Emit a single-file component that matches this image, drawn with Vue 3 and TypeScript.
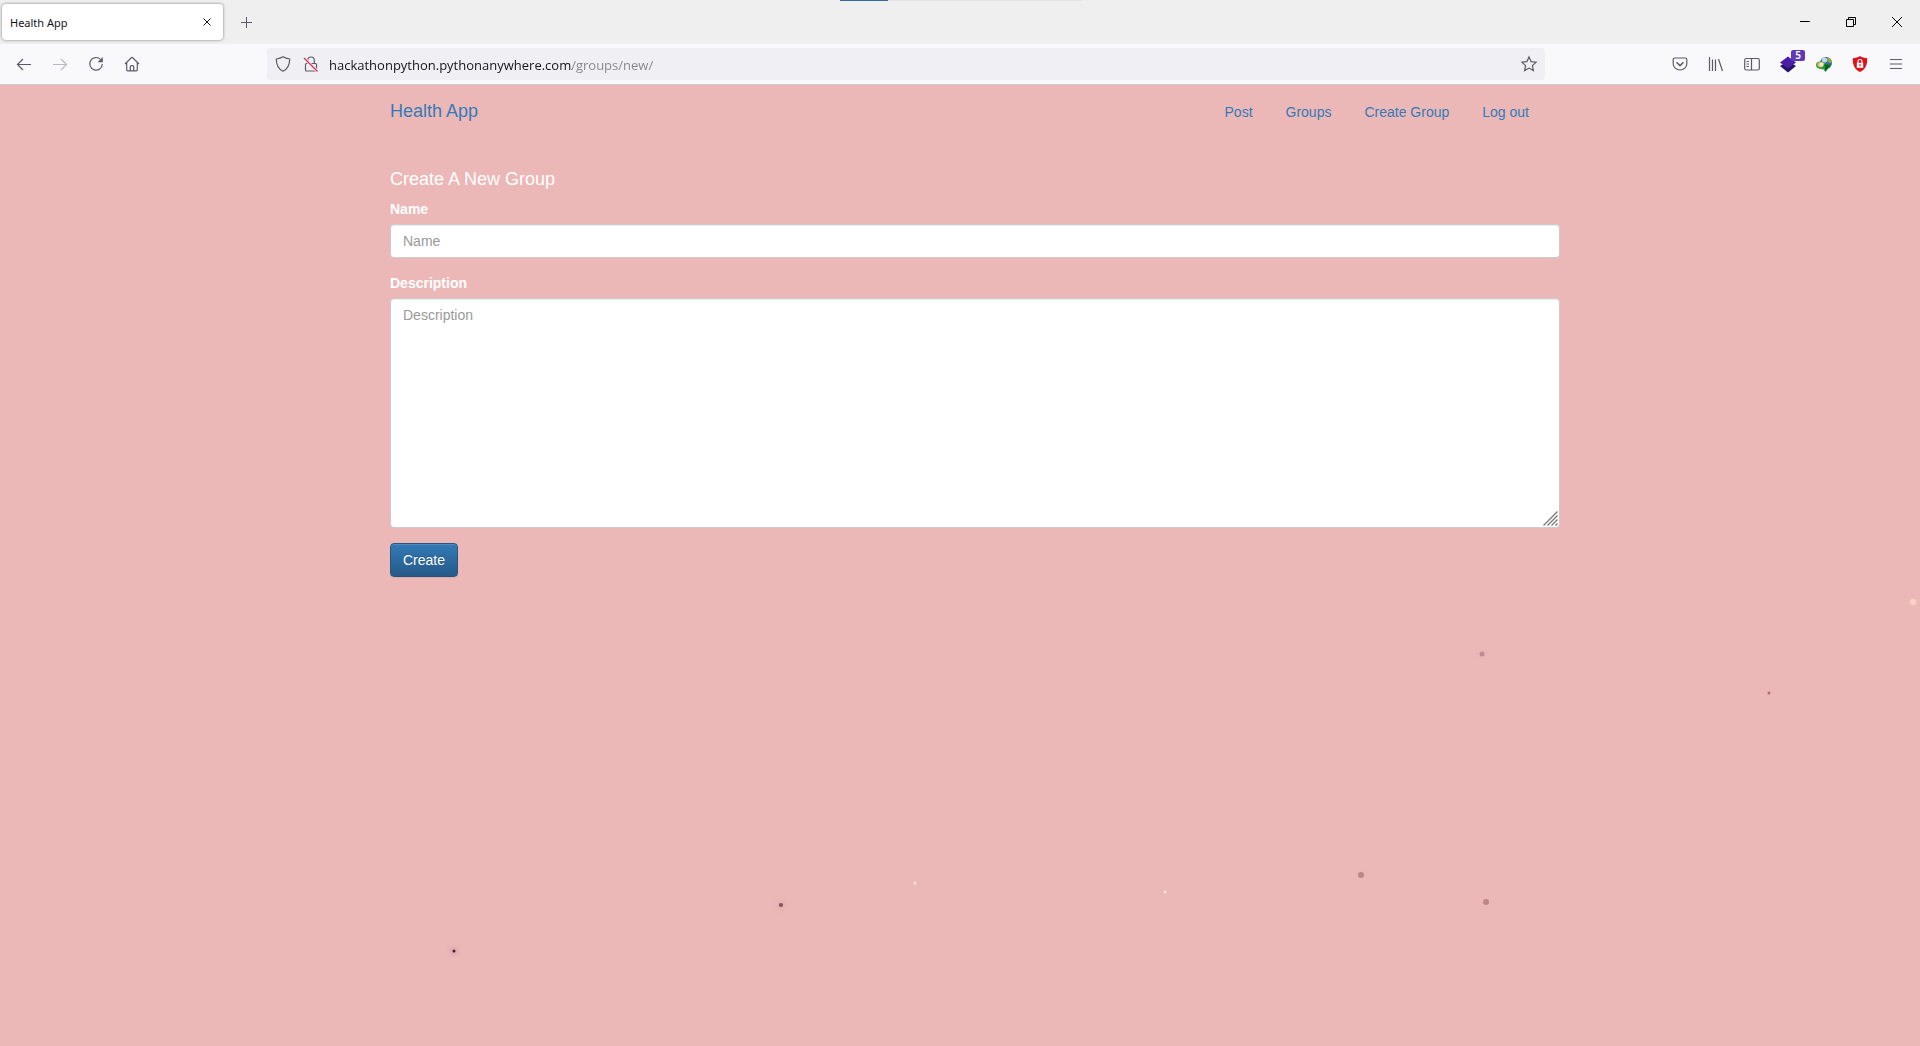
<script setup lang="ts">
import { ref } from 'vue'

interface Particle {
  x: number
  y: number
  size: number
  color: string
  glow: string
}

const tabTitle = 'Health App'
const address = ref('hackathonpython.pythonanywhere.com/groups/new/')
const name = ref('')
const description = ref('')

const links: string[] = ['Post', 'Groups', 'Create Group', 'Log out']

// x is a share of the page width in percent, y is in pixels below the toolbar
const particles: Particle[] = [
  { x: 99.64, y: 517, size: 6, color: '#fad2c4', glow: '0 0 2px #f7cdc0' },
  { x: 77.2, y: 569, size: 5, color: '#c28a91', glow: '0 0 6px rgba(220, 150, 170, 0.3)' },
  { x: 92.14, y: 608, size: 3, color: '#ad7079', glow: '0 0 4px rgba(220, 140, 180, 0.4)' },
  { x: 70.88, y: 790, size: 6, color: '#bd8686', glow: '0 0 12px rgba(220, 160, 165, 0.2)' },
  { x: 77.4, y: 817, size: 6, color: '#bd8686', glow: '0 0 14px rgba(220, 160, 165, 0.2)' },
  { x: 47.66, y: 798, size: 3, color: '#fde0d8', glow: 'none' },
  { x: 60.68, y: 807, size: 3, color: '#fde0d8', glow: 'none' },
  { x: 40.7, y: 820, size: 4, color: '#80505f', glow: '0 0 6px 1px rgba(190, 120, 160, 0.4)' },
  { x: 23.65, y: 866, size: 3, color: '#452038', glow: '0 0 5px 1px rgba(170, 100, 150, 0.5)' },
]
</script>

<template>
  <div class="browser">
    <div class="tabstrip">
      <div class="tab">
        <span class="tab-title">{{ tabTitle }}</span>
        <button class="tab-close" type="button" aria-label="Close tab">
          <svg width="10" height="10" viewBox="0 0 10 10"><path d="M1.5 1.5l7 7M8.500 1.500l-7 7" stroke="#15141a" /></svg>
        </button>
      </div>
      <button class="new-tab" type="button" aria-label="New tab">
        <svg width="13" height="13" viewBox="0 0 13 13"><path d="M6.500 1v11M1 6.500h11" stroke="#5b5b66" /></svg>
      </button>
      <div class="load-bar"><div class="load-fill"></div></div>
      <div class="window-buttons">
        <button type="button" aria-label="Minimize">
          <svg width="12" height="12" viewBox="0 0 12 12"><path d="M1 5.500h10" stroke="#000" /></svg>
        </button>
        <button type="button" aria-label="Restore">
          <svg width="12" height="12" viewBox="0 0 12 12" fill="none" stroke="#000"><path d="M1.500 3.500h7v7h-7zM3.500 3.500v-2h7v7h-2" /></svg>
        </button>
        <button type="button" aria-label="Close window">
          <svg width="12" height="12" viewBox="0 0 12 12"><path d="M1 1l10 10M11 1L1 11" stroke="#000" /></svg>
        </button>
      </div>
    </div>

    <div class="toolbar">
      <div class="nav-buttons">
        <button type="button" aria-label="Back">
          <svg viewBox="0 0 16 16"><path d="M15 8.500H1.500M7 3L1.500 8.500 7 14" /></svg>
        </button>
        <button class="disabled" type="button" aria-label="Forward">
          <svg viewBox="0 0 16 16"><path d="M1 8.500h13.500M9 3L14.500 8.500 9 14" /></svg>
        </button>
        <button type="button" aria-label="Reload">
          <svg viewBox="0 0 16 16"><path d="M12.500 3.400A6.300 6.300 0 1 0 14.300 8" /><path d="M14.800 1v5.200H9.600z" fill="#5b5b66" stroke="none" /></svg>
        </button>
        <button type="button" aria-label="Home">
          <svg viewBox="0 0 16 16"><path d="M1 8l6.300-6.200a1 1 0 0 1 1.400 0L15 8M2.700 6.500v7.300a1 1 0 0 0 1 1h8.600a1 1 0 0 0 1-1V6.500M6.300 14.800v-4a1.200 1.200 0 0 1 1.200-1.200h1a1.200 1.200 0 0 1 1.200 1.200v4" /></svg>
        </button>
      </div>

      <div class="urlbar">
        <svg viewBox="0 0 16 16"><path d="M8 .8c2 1.300 4 1.900 6.700 2.200 0 5.600-1.700 9.900-6.700 12.200C3 12.900 1.300 8.600 1.300 3 4 2.700 6 2.100 8 .8z" /></svg>
        <svg viewBox="0 0 16 16"><rect x="2.500" y="7.500" width="11" height="7.500" rx="1" /><path d="M4.700 7.500V4.300a3.300 3.300 0 0 1 6.600 0v3.200" /><path d="M1 2l13.500 13.500" stroke="#f0f0f4" stroke-width="3" /><path d="M1 2l13.500 13.500" stroke="#e22850" stroke-width="1.300" /></svg>
        <input v-model="address" class="address" type="text" aria-label="Address" />
        <svg viewBox="0 0 16 16"><path d="M8 1l2.100 4.600 5 .6-3.700 3.400 1 5L8 12.100l-4.400 2.500 1-5L.9 6.200l5-.6z" /></svg>
      </div>

      <div class="extensions">
        <button type="button" aria-label="Pocket">
          <svg viewBox="0 0 16 16"><path d="M2.700 2h10.600a1.500 1.500 0 0 1 1.500 1.500v4.200a6.800 6.300 0 0 1-13.600 0V3.500A1.500 1.500 0 0 1 2.700 2z" /><path d="M4.500 6.300L8 9.600l3.500-3.300" stroke-width="1.500" /></svg>
        </button>
        <button type="button" aria-label="Library">
          <svg viewBox="0 0 16 16"><path d="M1.500 1v14M4.500 3.500V15M7.500 3.500V15M10.500 3L14.500 15" /></svg>
        </button>
        <button type="button" aria-label="Sidebars">
          <svg viewBox="0 0 16 16"><rect x=".7" y="2.500" width="14.600" height="11.500" rx="1.500" /><path d="M7.500 2.500V14M2.500 5.500H5M2.500 8H5M2.500 10.500H5" /></svg>
        </button>
        <button class="badged" type="button" aria-label="Web analyzer">
          <svg viewBox="0 0 16 16" stroke="none"><path d="M0 10l8-5 8 5-8 6.500z" fill="#25126b" /><path d="M0 6.500L8 .5l8 6-8 6z" fill="#4a1fa5" /></svg>
          <span class="badge">5</span>
        </button>
        <button type="button" aria-label="Download manager">
          <svg viewBox="0 0 16 16" stroke="none">
            <circle cx="10" cy="7" r="6" fill="#2f6cb3" />
            <circle cx="8.500" cy="4" r="2.600" fill="#b9d9ed" />
            <path d="M11 1.200c3 .3 4.600 2.300 5 5.300l-3 .5-2-2z" fill="#8fa63a" />
            <ellipse cx="4.500" cy="9" rx="4.500" ry="3.600" fill="#3c9a3a" />
            <ellipse cx="5" cy="8.600" rx="3.600" ry="2.600" fill="#e0c05a" />
            <path d="M3.500 10.500c-.5-2.500.5-4 2-4s2 1.500 2 3.500z" fill="#f1e2da" />
            <path d="M2 11c3 2 5 1 6-3h7.500l-6 8-2.500-3c-2 .5-4 0-5-2z" fill="#2d9b35" />
            <path d="M8.500 8.500h6.500l-5.500 7z" fill="#08651d" />
          </svg>
        </button>
        <button type="button" aria-label="Ad blocker">
          <svg viewBox="0 0 16 16" stroke="none"><path d="M8 0c2 1.400 4.500 2 7.200 2.200C15.500 8.500 13.500 13.500 8 16 2.500 13.500.5 8.500.8 2.200 3.500 2 6 1.400 8 0z" fill="#df1119" /><rect x="4.800" y="6.800" width="6.400" height="5" fill="#fff" /><path d="M6 7V5.500a2 2 0 0 1 4 0V7" fill="none" stroke="#fff" stroke-width="1.200" /><path d="M8 8.200v2" stroke="#df1119" stroke-width="1.200" /></svg>
        </button>
        <button type="button" aria-label="Menu">
          <svg viewBox="0 0 16 16"><path d="M2 3.500h12M2 8h12M2 12.500h12" /></svg>
        </button>
      </div>
    </div>

    <main class="page">
      <span
        v-for="(p, i) in particles"
        :key="i"
        class="particle"
        :style="{ left: p.x + '%', top: p.y + 'px', width: p.size + 'px', height: p.size + 'px', background: p.color, boxShadow: p.glow }"
      ></span>

      <div class="container">
        <header class="navbar">
          <a class="brand" href="#">Health App</a>
          <nav class="links">
            <a v-for="link in links" :key="link" href="#">{{ link }}</a>
          </nav>
        </header>

        <form @submit.prevent>
          <h1>Create A New Group</h1>
          <div class="group">
            <label for="group-name">Name</label>
            <input id="group-name" v-model="name" class="control" type="text" placeholder="Name" />
          </div>
          <div class="group">
            <label for="group-description">Description</label>
            <div class="area">
              <textarea id="group-description" v-model="description" class="control" placeholder="Description"></textarea>
              <svg class="grip" width="15" height="15" viewBox="0 0 15 15"><path d="M.5 14.500l14-14M4.500 14.500l10-10M8.500 14.500l6-6M12.500 14.500l2-2" stroke="#777" stroke-width="1.300" /></svg>
            </div>
          </div>
          <button class="submit" type="submit">Create</button>
        </form>
      </div>
    </main>
  </div>
</template>

<style>
body {
  margin: 0;
  background: #ecb8b7;
}
</style>

<style scoped>
* {
  box-sizing: border-box;
}

.browser {
  display: flex;
  flex-direction: column;
  min-height: 100vh;
  font-family: "Open Sans", "Noto Sans", sans-serif;
}

.browser button {
  border: 0;
  padding: 0;
  background: none;
}

.tabstrip {
  position: relative;
  display: flex;
  align-items: center;
  height: 44px;
  padding-left: 2px;
  background: #efefef;
}

.tab {
  display: flex;
  align-items: center;
  justify-content: space-between;
  width: 221px;
  height: 36px;
  padding: 0 10px 0 8px;
  border-radius: 4px;
  background: #fff;
  box-shadow: 0 0 3px rgba(0, 0, 0, 0.5);
}

.tab-title {
  font-family: "Noto Sans", sans-serif;
  font-size: 11px;
  color: #15141a;
}

.tab-close,
.new-tab {
  display: flex;
  align-items: center;
  justify-content: center;
}

.tab-close {
  width: 12px;
  height: 20px;
}

.new-tab {
  width: 32px;
  height: 32px;
  margin-left: 7px;
}

.load-bar {
  position: absolute;
  top: 0;
  left: 50%;
  width: 242px;
  height: 1px;
  margin-left: -120px;
  background: #e2e2e2;
}

.load-fill {
  width: 20%;
  height: 1px;
  background: #2f6da4;
}

.window-buttons {
  display: flex;
  align-self: stretch;
  margin-left: auto;
}

.window-buttons button {
  display: flex;
  align-items: center;
  justify-content: center;
  width: 46px;
}

.toolbar {
  display: flex;
  align-items: center;
  height: 41px;
  padding: 0 6px;
  border-bottom: 1px solid #cfcccf;
  background: #f9f9fb;
}

.toolbar svg {
  flex: none;
  width: 16px;
  height: 16px;
  overflow: visible;
  fill: none;
}

.toolbar svg:not([stroke]) {
  stroke: #5b5b66;
  stroke-width: 1.2;
}

.nav-buttons,
.extensions {
  display: flex;
}

.nav-buttons button,
.extensions button {
  display: flex;
  align-items: center;
  justify-content: center;
  width: 36px;
  height: 32px;
}

.nav-buttons .disabled {
  opacity: 0.4;
}

.urlbar {
  display: flex;
  flex: 1;
  align-items: center;
  gap: 12px;
  height: 32px;
  margin: 0 117px;
  padding: 0 8px;
  border-radius: 4px;
  background: #f0f0f4;
}

.address {
  flex: 1;
  min-width: 0;
  height: 26px;
  margin-left: -2px;
  padding: 2px 0 0;
  border: 0;
  outline: 0;
  background: linear-gradient(to right, #15141a 243px, #85848b 243px);
  background-clip: text;
  -webkit-background-clip: text;
  color: transparent;
  font-family: inherit;
  font-size: 13px;
}

.badged {
  position: relative;
}

.badge {
  position: absolute;
  top: 2px;
  right: 1px;
  width: 14px;
  height: 11px;
  border-radius: 2px;
  background: #6237b8;
  color: #fff;
  font-family: "Noto Sans", sans-serif;
  font-size: 10px;
  font-weight: 600;
  line-height: 11px;
  text-align: center;
}

.page {
  position: relative;
  flex: 1;
  overflow: hidden;
  background: #ecb8b7;
  font-family: "Liberation Sans", Arial, sans-serif;
  font-size: 14px;
  line-height: 20px;
}

.particle {
  position: absolute;
  border-radius: 50%;
  transform: translate(-50%, -50%);
}

.container {
  max-width: 1200px;
  margin: 0 auto;
  padding-left: 30px;
}

.navbar {
  display: flex;
  align-items: baseline;
  justify-content: space-between;
  height: 52px;
  padding: 16px 31px 0 0;
}

.navbar a {
  color: #337ab7;
  text-decoration: none;
}

.brand {
  font-size: 18px;
}

.links {
  display: flex;
  gap: 33px;
}

h1 {
  margin: 32px 0 10px;
  color: #fff;
  font-size: 18px;
  font-weight: 400;
  line-height: 20px;
}

.group {
  margin-bottom: 15px;
}

label {
  display: block;
  margin-bottom: 5px;
  color: #fff;
  font-weight: 700;
}

.control {
  display: block;
  width: 100%;
  height: 34px;
  padding: 6px 12px;
  border: 1px solid #ccc;
  border-radius: 4px;
  background: #fff;
  box-shadow: inset 0 1px 1px rgba(0, 0, 0, 0.075);
  color: #555;
  font-family: inherit;
  font-size: 14px;
  line-height: 20px;
}

.control::placeholder {
  color: #999;
}

.area {
  position: relative;
}

textarea.control {
  height: 230px;
  resize: vertical;
}

textarea.control::-webkit-resizer {
  display: none;
}

.grip {
  position: absolute;
  right: 2px;
  bottom: 2px;
  pointer-events: none;
}

.page .submit {
  height: 34px;
  padding: 0 12px;
  border: 1px solid #245580;
  border-radius: 4px;
  background: linear-gradient(to bottom, #337ab7, #265a88);
  box-shadow: inset 0 1px 0 rgba(255, 255, 255, 0.15), 0 1px 1px rgba(0, 0, 0, 0.075);
  color: #fff;
  font-family: inherit;
  font-size: 14px;
  text-shadow: 0 -1px 0 rgba(0, 0, 0, 0.2);
}
</style>
